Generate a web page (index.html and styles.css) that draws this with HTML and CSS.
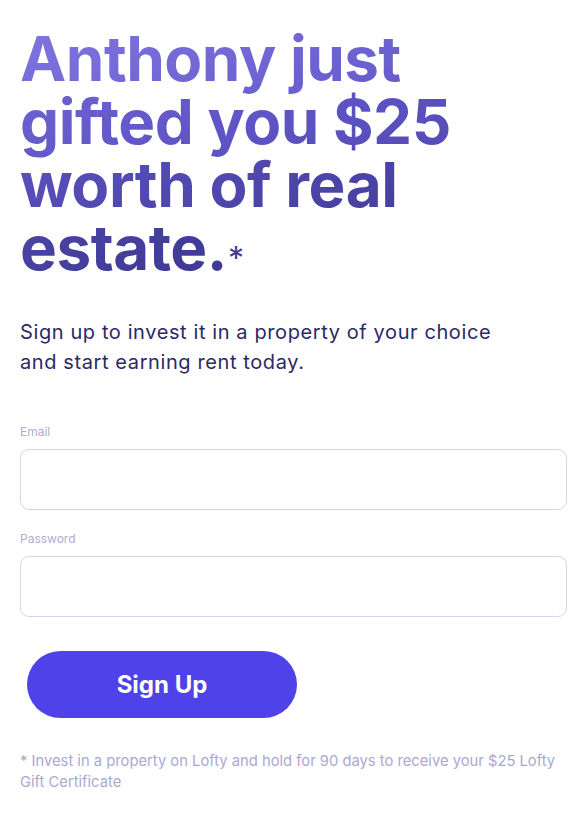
FILE: index.html
```html
<!DOCTYPE html>
<html>
<head>
<meta charset="utf-8">
<link rel="stylesheet" href="styles.css">
</head>
<body>
<main class="page">
  <h1 class="headline"><span class="grad">Anthony just gifted you $25 worth of real estate.</span><span class="star">*</span></h1>
  <p class="lead">Sign up to invest it in a property of your choice and start earning rent today.</p>
  <form class="form">
    <label class="field">
      <span class="label">Email</span>
      <input class="input" type="email">
    </label>
    <label class="field">
      <span class="label">Password</span>
      <input class="input" type="password">
    </label>
    <button class="btn" type="button">Sign Up</button>
  </form>
  <p class="note">* Invest in a property on Lofty and hold for 90 days to receive your $25 Lofty Gift Certificate</p>
</main>
</body>
</html>
```
FILE: styles.css
```css
* { box-sizing: border-box; }
html, body { margin: 0; padding: 0; background: #fff; }
body { font-family: Inter, "Noto Sans", sans-serif; }
.page { padding: 27px 20px 0 20px; }
.headline {
  margin: 0;
  font-size: 62px;
  line-height: 63px;
  font-weight: 700;
  letter-spacing: -0.5px;
  width: 450px;
}
.grad {
  background: linear-gradient(160deg, #8175e0 0%, #5e54c6 45%, #3d3890 100%);
  -webkit-background-clip: text;
  background-clip: text;
  color: transparent;
}
.star {
  font-size: 32px;
  font-weight: 400;
  color: #3f3a92;
  margin-left: 1px;
}
.lead {
  margin: 27px 0 0 0;
  font-size: 20px;
  line-height: 30px;
  letter-spacing: 0.6px;
  color: #2a2a66;
  width: 475px;
}
.form {
  margin-top: 47px;
  display: flex;
  flex-direction: column;
}
.field { display: flex; flex-direction: column; margin-bottom: 21px; }
.label {
  font-size: 12px;
  line-height: 16px;
  color: #b1add3;
  margin-bottom: 9px;
}
.input {
  height: 61px;
  border: 1px solid #d6d4ea;
  border-radius: 9px;
  background: #fff;
  font: inherit;
  outline: none;
}
.field + .field { margin-bottom: 0; }
.btn {
  margin: 34px 0 0 7px;
  width: 270px;
  height: 67px;
  border: none;
  border-radius: 34px;
  background: #4e42e8;
  color: #fff;
  font-family: Inter, sans-serif;
  font-weight: 700;
  font-size: 24px;
  cursor: pointer;
}
.note {
  margin: 33px 0 0 0;
  font-size: 14.75px;
  line-height: 21px;
  color: #aba8d0;
}
```
